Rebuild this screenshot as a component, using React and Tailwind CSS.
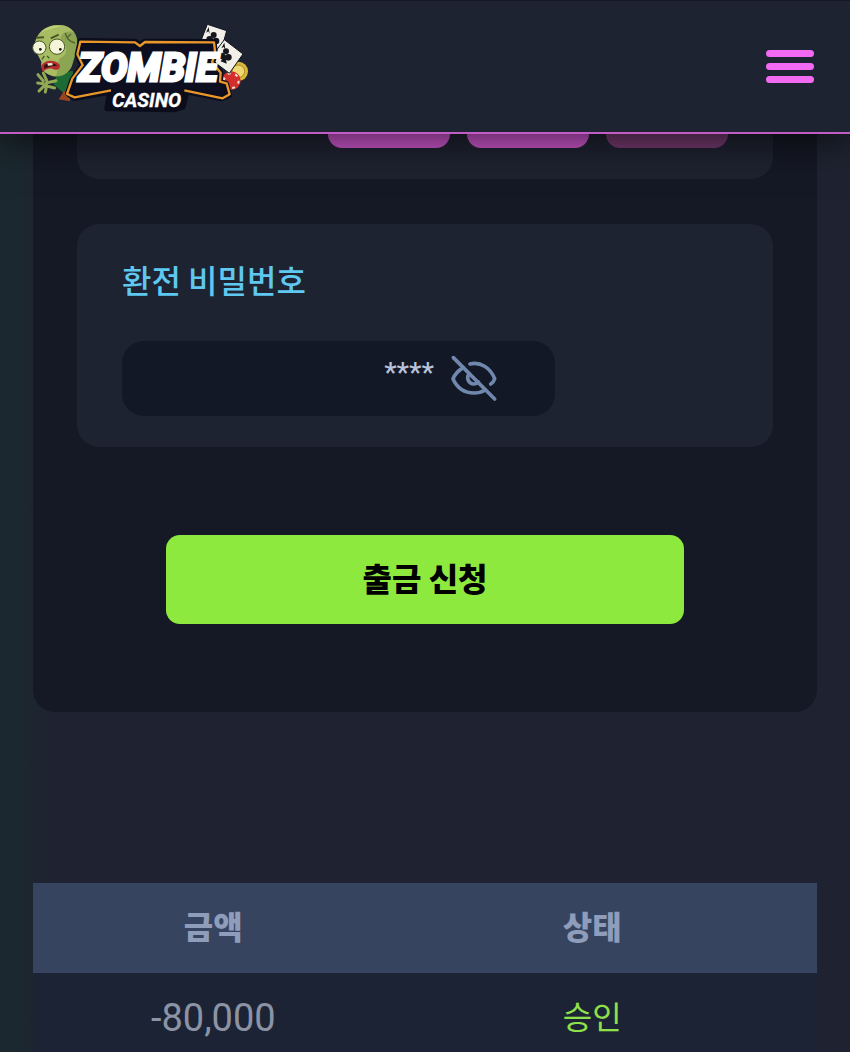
import { useState } from 'react';

const amounts = [
  { label: '1만', className: 'bg-[#cc55cb]' },
  { label: '5만', className: 'bg-[#cc55cb]' },
  { label: '정정', className: 'bg-[#74396f]' },
];

const rows = [{ amount: '-80,000', status: '승인' }];

function Logo() {
  return (
    <svg viewBox="0 0 720 330" className="h-[110px] w-[240px]" role="img" aria-label="Zombie Casino">
      {/* cards and chips */}
      <circle cx="655" cy="178" r="29" fill="#d9b93c" />
      <circle cx="655" cy="178" r="19" fill="#efd872" stroke="#a88920" strokeWidth="3" />
      <circle cx="634" cy="206" r="28" fill="#d22f2c" />
      <circle cx="634" cy="206" r="22" fill="none" stroke="#f3d9cf" strokeWidth="6" strokeDasharray="9 14" />
      <g stroke="#10131f" strokeWidth="3">
        <path d="M562 37 L620 56 L600 128 L536 104 Z" fill="#f2efe8" />
        <path d="M613 83 L669 126 L628 184 L570 140 Z" fill="#f2efe8" />
      </g>
      <g fill="#15151d">
        <circle cx="581" cy="69" r="9" />
        <circle cx="569" cy="82" r="10" />
        <circle cx="588" cy="87" r="10" />
        <path d="M580 78 L584 104 L568 98 Z" />
        <circle cx="618" cy="118" r="9" />
        <circle cx="606" cy="132" r="10" />
        <circle cx="625" cy="136" r="10" />
        <path d="M616 128 L620 155 L602 148 Z" />
        <path d="M558 62 L566 45 L569 65 L565 58 Z" />
        <path d="M604 109 L613 92 L616 112 L611 105 Z" />
      </g>

      {/* zombie */}
      <path d="M112 186 L158 176 L168 232 L138 250 L100 216 Z" fill="#1d6a35" />
      <path d="M132 236 L150 246 L150 268 L116 262 L124 250 Z" fill="#9a4522" />
      <path
        d="M48 82 C60 52 88 36 122 39 C158 43 177 70 171 103 C168 126 161 143 157 158 C150 184 119 200 94 191 C72 183 60 168 65 150 C55 130 38 108 48 82 Z"
        fill="#8ba552"
      />
      <path
        d="M48 82 C60 52 88 36 122 39 C140 41 153 49 161 60 C135 54 117 69 124 85 C146 103 143 132 119 139 C112 152 116 170 108 193 C72 188 60 168 65 150 C55 130 38 108 48 82 Z"
        fill="#a8bd63"
      />
      <path d="M64 60 C82 43 104 41 123 42 C104 48 82 52 64 60 Z" fill="#c3d37b" />
      <path d="M136 63 C140 83 151 90 165 93 M140 78 L153 66" fill="none" stroke="#52652d" strokeWidth="4" />
      <circle cx="58" cy="107" r="20" fill="#f4f4d8" stroke="#455728" strokeWidth="3" />
      <circle cx="111" cy="104" r="23" fill="#f4f4d8" stroke="#455728" strokeWidth="3" />
      <circle cx="61" cy="112" r="4" fill="#151b14" />
      <circle cx="121" cy="112" r="4" fill="#151b14" />
      <path d="M48 77 L72 76 M92 79 L116 68" stroke="#455728" strokeWidth="6" />
      <path d="M73 132 L66 142 M81 132 L88 139" stroke="#495b2a" strokeWidth="4" />
      <path d="M63 163 C72 143 106 141 119 158 C122 168 115 175 104 173 C88 165 78 172 68 179 Z" fill="#b72e31" />
      <path d="M72 160 C85 150 103 151 112 162 C96 161 84 164 73 171 Z" fill="#351315" />
      <path d="M82 154 L97 153 L98 160 L84 161 Z" fill="#efeccb" />
      <path
        d="M54 188 L70 207 M70 183 L80 205 M53 213 L69 215 M57 237 L74 220 M76 240 L80 220 M108 206 L78 213 M104 228 L80 222"
        fill="none"
        stroke="#91a952"
        strokeWidth="9"
        strokeLinecap="round"
        strokeLinejoin="round"
      />

      {/* plate */}
      <path
        d="M183 88 L345 90 L360 101 L374 90 L580 91 L584 126 L575 151 L600 181 L598 211 L617 216 L626 249 L605 258 L499 237 L487 284 L463 291 L263 288 L272 238 L164 257 L145 244 L158 205 L188 159 L174 128 Z"
        fill="#0d0f20"
        stroke="#0b0d1c"
        strokeWidth="20"
        strokeLinejoin="round"
      />
      <path
        d="M273 235 L164 256 L141 246 L157 200 L188 159 L172 127 L181 89 L345 91 L360 102 L375 90 L582 91 L586 126 L576 150 L602 182 L600 209 L620 214 L629 247 L608 259 L493 235"
        fill="none"
        stroke="#e9962a"
        strokeWidth="7"
        strokeLinejoin="round"
      />
      <g
        fill="#ffffff"
        stroke="#ffffff"
        strokeLinejoin="miter"
        fontFamily="Roboto, 'Liberation Sans', sans-serif"
        fontWeight="700"
        fontStyle="italic"
      >
        <text x="384" y="206" fontSize="118" strokeWidth="9" textAnchor="middle">ZOMBIE</text>
        <text x="380" y="286" fontSize="59" strokeWidth="1" textAnchor="middle">CASINO</text>
      </g>
    </svg>
  );
}

function EyeOffIcon() {
  return (
    <svg
      viewBox="0 0 150 150"
      className="size-[50px]"
      fill="none"
      stroke="#7188ae"
      strokeWidth="11"
      strokeLinecap="round"
      strokeLinejoin="round"
      aria-hidden="true"
    >
      <path d="M10 11 L134 135" />
      <path d="M40 41 C26 49 14 62 9 75 C22 103 44 117 72 117 C84 117 96 114 106 108" />
      <path d="M60 30 C91 22 121 41 134 74 C132 81 128 86 122 90" />
      <path d="M56 61 C49 74 56 89 71 90 C77 90 82 88 85 84" />
    </svg>
  );
}

export default function App() {
  const [password, setPassword] = useState('****');

  return (
    <div className="flex h-screen flex-col overflow-hidden bg-linear-to-r from-[#1b282f] from-2% to-[#1f2331] to-6% font-['Noto_Sans_CJK_KR',sans-serif] text-[32px]">
      <header className="relative z-10 flex h-[134px] shrink-0 items-center justify-between border-t border-b-2 border-t-[#141824] border-b-[#c05cc3] bg-[#1e2331] pr-9 pl-5 shadow-[0_4px_40px_rgba(0,0,0,0.7)]">
        <a href="#home">
          <Logo />
        </a>
        <button type="button" aria-label="메뉴" className="flex w-12 flex-col gap-1.5">
          <span className="h-[7px] w-full rounded-full bg-[#f26af2]" />
          <span className="h-[7px] w-full rounded-full bg-[#f26af2]" />
          <span className="h-[7px] w-full rounded-full bg-[#f26af2]" />
        </button>
      </header>

      <main className="min-h-0 flex-1 overflow-hidden px-[33px]">
        {/* the amount row sits scrolled under the header */}
        <section className="-mt-[117px] flex flex-col rounded-[22px] bg-[#151825] px-11 pt-11 pb-[88px]">
          <div className="flex justify-end gap-[17px] rounded-[22px] bg-[#1e2230] px-[45px] py-[31px]">
            {amounts.map((item) => (
              <button
                key={item.label}
                type="button"
                aria-label={item.label}
                className={`h-14 w-[122px] rounded-[14px] ${item.className}`}
              />
            ))}
          </div>

          <div className="mt-[45px] rounded-[22px] bg-[#1e2331] px-[45px] pt-7 pb-[31px]">
            <label htmlFor="password" className="block leading-[54px] font-medium text-[#5fc8f0]">
              환전 비밀번호
            </label>
            <div className="mt-[35px] flex h-[75px] w-5/7 items-center rounded-[22px] bg-[#131826] pr-[55px]">
              <input
                id="password"
                type="text"
                value={password}
                onChange={(e) => setPassword(e.target.value)}
                className="h-full min-w-0 flex-1 bg-transparent pr-4 pb-3 text-right font-['Roboto'] text-[28px] font-medium text-[#b8c3da] outline-none"
              />
              <button type="button" aria-label="비밀번호 표시">
                <EyeOffIcon />
              </button>
            </div>
          </div>

          <button
            type="button"
            className="mt-[88px] h-[89px] w-[518px] max-w-full self-center rounded-[14px] bg-[#8ee93f] pb-1.5 font-black text-black"
          >
            출금 신청
          </button>
        </section>

        <table className="mt-[171px] w-full table-fixed text-center">
          <thead className="bg-[#37445f] text-[#8f9cba]">
            <tr className="h-[90px]">
              <th className="w-[46%] pb-1.5 font-black">금액</th>
              <th className="pr-[26px] pb-1.5 font-black">상태</th>
            </tr>
          </thead>
          <tbody>
            {rows.map((row) => (
              <tr key={row.amount} className="h-[90px] bg-[#1c2334]">
                <td className="font-['Roboto'] text-[38px] text-[#8b93a5]">{row.amount}</td>
                <td className="pr-[26px] pb-1.5 text-[#8fe04a]">{row.status}</td>
              </tr>
            ))}
          </tbody>
        </table>
      </main>
    </div>
  );
}
